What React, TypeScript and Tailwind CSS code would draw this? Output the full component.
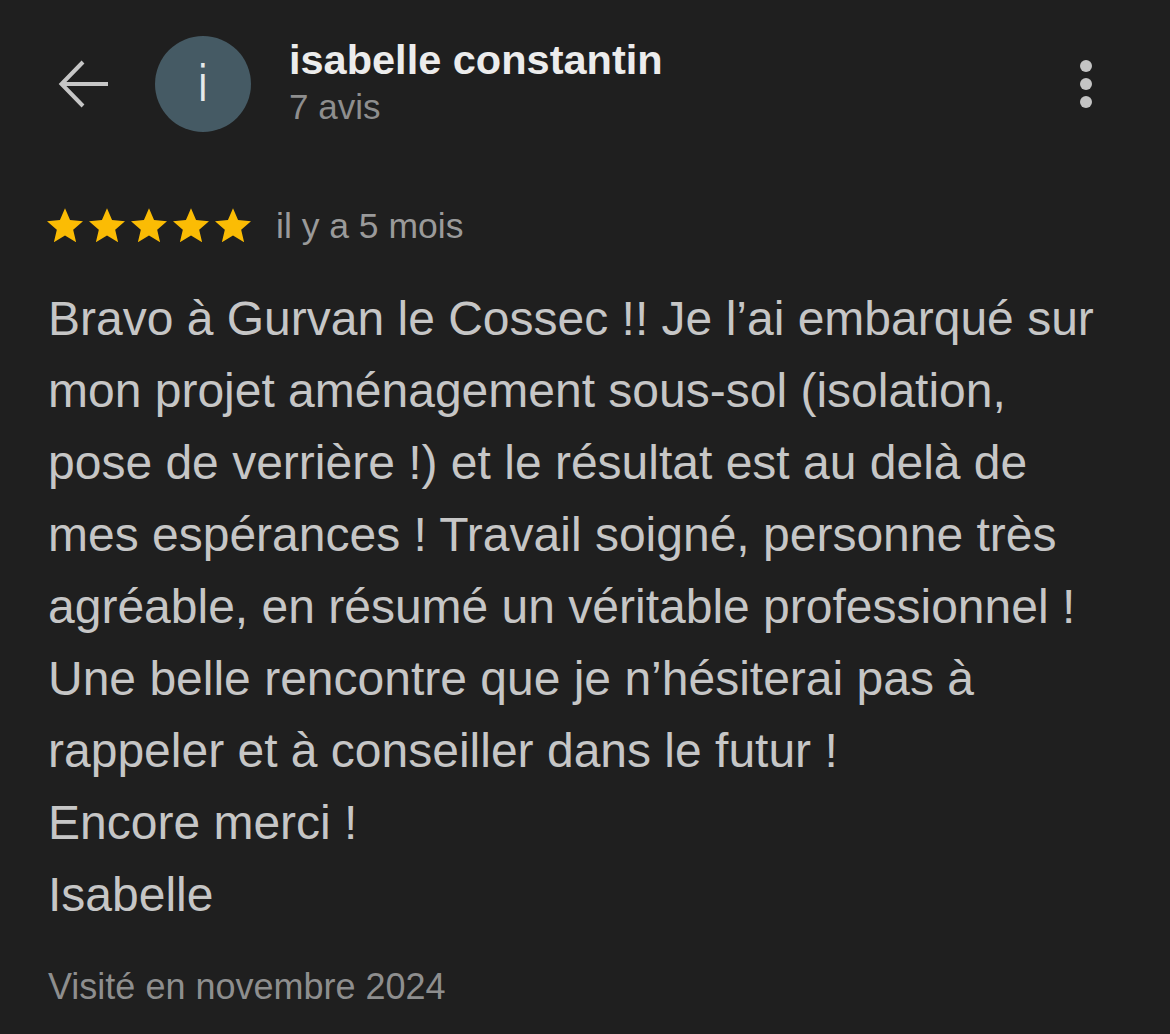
import React from "react";

const Star: React.FC = () => (
  <svg viewBox="2 2 20 19.3" width={36} height={35} className="shrink-0">
    <path
      d="M12 17.27L18.18 21l-1.64-7.03L22 9.24l-7.19-.61L12 2 9.19 8.63 2 9.24l5.46 4.73L5.82 21z"
      fill="#fbbc04"
    />
  </svg>
);

const BackArrow: React.FC = () => (
  <svg viewBox="0 0 52 52" width={52} height={52} className="shrink-0">
    <path
      d="M50 26H4M25 4L3.5 26 25 48"
      fill="none"
      stroke="#c6c6c6"
      strokeWidth={4}
    />
  </svg>
);

const MoreDots: React.FC = () => (
  <svg viewBox="0 0 20 48" width={20} height={48} className="shrink-0">
    <circle cx={10} cy={6} r={6} fill="#c4c4c4" />
    <circle cx={10} cy={24} r={6} fill="#c4c4c4" />
    <circle cx={10} cy={42} r={6} fill="#c4c4c4" />
  </svg>
);

const review = `Bravo à Gurvan le Cossec !! Je l’ai embarqué sur mon projet aménagement sous-sol (isolation, pose de verrière !) et le résultat est au delà de mes espérances ! Travail soigné, personne très agréable, en résumé un véritable professionnel ! Une belle rencontre que je n’hésiterai pas à rappeler et à conseiller dans le futur !
Encore merci !
Isabelle`;

export default function App() {
  return (
    <div
      className="w-[1170px] h-[1034px] bg-[#1f1f1f] overflow-hidden"
      style={{ fontFamily: '"Liberation Sans", Arial, sans-serif' }}
    >
      {/* header */}
      <div className="flex items-center pt-[36px] pl-[58px] pr-[74px]">
        <BackArrow />
        <div className="ml-[45px] w-[96px] h-[96px] rounded-full bg-[#455a64] flex items-center justify-center shrink-0">
          <span className="text-[52px] leading-none font-light text-[#e6e9ea] -mt-[2px] scale-x-75">i</span>
        </div>
        <div className="ml-[38px] flex flex-col -mt-[4px]">
          <span className="text-[41.5px] leading-[48px] font-bold text-[#ececec]">
            isabelle constantin
          </span>
          <span className="text-[35px] leading-[42px] text-[#8e8e8e] mt-[2px]">7 avis</span>
        </div>
        <div className="ml-auto self-start mt-[24px]">
          <MoreDots />
        </div>
      </div>

      {/* rating */}
      <div className="flex items-center h-[42px] mt-[72px] pl-[47px]">
        <div className="flex gap-[6px]">
          <Star />
          <Star />
          <Star />
          <Star />
          <Star />
        </div>
        <span className="ml-[25px] text-[35.5px] leading-[42px] text-[#9a9a9a] mt-[2px]">
          il y a 5 mois
        </span>
      </div>

      {/* body */}
      <p className="mt-[37px] px-[48px] text-[48px] leading-[72px] text-[#c6c6c6] whitespace-pre-line">
        {review}
      </p>

      <div className="mt-[35px] pl-[48px] text-[36px] leading-[42px] text-[#8e8e8e]">
        Visité en novembre 2024
      </div>
    </div>
  );
}
